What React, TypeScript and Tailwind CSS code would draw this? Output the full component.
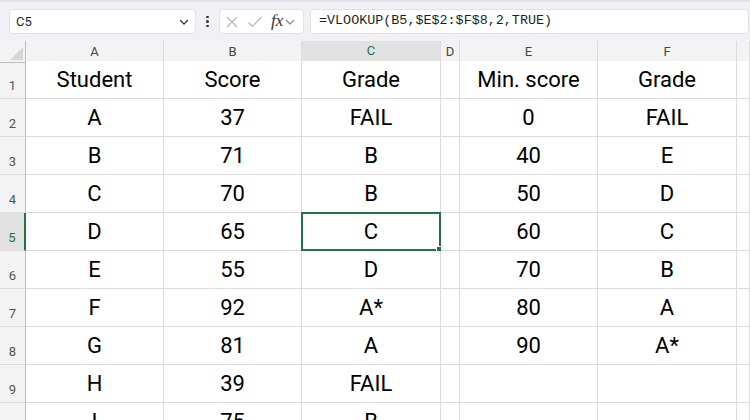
import React from "react";

const rows: string[][] = [
  ["Student", "Score", "Grade", "", "Min. score", "Grade"],
  ["A", "37", "FAIL", "", "0", "FAIL"],
  ["B", "71", "B", "", "40", "E"],
  ["C", "70", "B", "", "50", "D"],
  ["D", "65", "C", "", "60", "C"],
  ["E", "55", "D", "", "70", "B"],
  ["F", "92", "A*", "", "80", "A"],
  ["G", "81", "A", "", "90", "A*"],
  ["H", "39", "FAIL", "", "", ""],
  ["I", "75", "B", "", "", ""],
];

const cols = ["A", "B", "C", "D", "E", "F", ""];
const gridCols = "grid grid-cols-[26px_138px_138px_139px_19px_138px_139px_1fr]";

function Chevron({ className }: { className: string }) {
  return (
    <svg width="12" height="12" viewBox="0 0 12 12" className={className}>
      <path d="M2.5 4.5 L6 8 L9.5 4.5" fill="none" stroke="currentColor" strokeWidth="1.2" strokeLinecap="round" strokeLinejoin="round" />
    </svg>
  );
}

function Toolbar() {
  return (
    <div className="bg-[#f1f0f5]">
      <div className="h-[2px] bg-[#e4e3e8]" />
      <div className="h-[39px] flex items-start pt-[7px] pl-[9px] gap-0">
        <div className="w-[187px] h-[25px] bg-white rounded-[4px] border border-[#e2e1e6] flex items-center pl-[6px] pr-[5px]">
          <span className="flex-1 text-[13px] text-[#1f1f1f]">C5</span>
          <Chevron className="text-[#333]" />
        </div>
        <div className="w-[23px] h-[25px] flex flex-col items-center justify-center gap-[2px]">
          <div className="w-[2.5px] h-[2.5px] bg-[#333] rounded-full" />
          <div className="w-[2.5px] h-[2.5px] bg-[#333] rounded-full" />
          <div className="w-[2.5px] h-[2.5px] bg-[#333] rounded-full" />
        </div>
        <div className="w-[85px] h-[25px] bg-white rounded-[4px] border border-[#e2e1e6] flex items-center pl-[5px]">
          <svg width="14" height="14" viewBox="0 0 14 14" className="text-[#b4b4b4]">
            <path d="M2 2 L12 12 M12 2 L2 12" stroke="currentColor" strokeWidth="1.1" />
          </svg>
          <svg width="16" height="14" viewBox="0 0 16 14" className="text-[#b4b4b4] ml-[8px]">
            <path d="M1.5 7.5 L5.5 11.5 L14.5 2" fill="none" stroke="currentColor" strokeWidth="1.1" />
          </svg>
          <span className="ml-[8px] text-[17px] italic text-[#333] leading-none pb-[2px]" style={{ fontFamily: "'Liberation Serif', serif" }}>
            fx
          </span>
          <Chevron className="text-[#888] ml-[1px]" />
        </div>
        <div className="ml-[6px] w-[439px] h-[25px] bg-white rounded-[4px] border border-[#e2e1e6] flex items-center pl-[8px]">
          <span className="text-[13.4px] text-[#1f1f1f]" style={{ fontFamily: "'Liberation Mono', monospace" }}>
            =VLOOKUP(B5,$E$2:$F$8,2,TRUE)
          </span>
        </div>
      </div>
    </div>
  );
}

function HeaderRow() {
  return (
    <div className={`${gridCols} h-[20px]`}>
      <div className="bg-[#f3f3f3] border-r border-b border-[#bdbdbd] relative">
        <div className="absolute right-[2px] bottom-[2px] w-0 h-0 border-l-[13px] border-l-transparent border-b-[13px] border-b-[#d6d6d6]" />
      </div>
      {cols.map((c, i) =>
        c === "C" ? (
          <div key={i} className="bg-[#e1e1e1] border-r border-[#dcdcdc] border-b-2 border-b-[#217346] flex items-center justify-center text-[13px] text-[#217346]">
            {c}
          </div>
        ) : (
          <div key={i} className="bg-[#f3f3f3] border-r border-r-[#dcdcdc] border-b border-b-[#bdbdbd] flex items-center justify-center text-[13px] text-[#444]">
            {c}
          </div>
        )
      )}
    </div>
  );
}

function DataRow({ n, cells }: { n: number; cells: string[] }) {
  const selectedRow = n === 5;
  return (
    <div className={`${gridCols} h-[38px]`}>
      <div
        className={
          selectedRow
            ? "bg-[#e1e1e1] border-r-2 border-r-[#217346] border-b border-b-[#dcdcdc] flex items-end justify-center pb-[3px] text-[13px] text-[#217346]"
            : "bg-[#f3f3f3] border-r border-r-[#bdbdbd] border-b border-b-[#dcdcdc] flex items-end justify-center pb-[3px] text-[13px] text-[#555]"
        }
      >
        {n}
      </div>
      {[...cells, ""].map((v, i) => (
        <div
          key={i}
          className="relative bg-white border-r border-b border-[#dcdcdc] flex items-end justify-center pb-[5px] text-[22px] leading-[26px] text-black"
        >
          {v}
          {selectedRow && i === 2 && (
            <div className="absolute left-[-1px] top-[-1px] right-[-1px] bottom-[-1px] border-2 border-[#217346]">
              <div className="absolute right-[-4px] bottom-[-4px] w-[6px] h-[6px] bg-[#217346] ring-1 ring-white" />
            </div>
          )}
        </div>
      ))}
    </div>
  );
}

export default function App() {
  return (
    <div className="w-[750px] h-[420px] overflow-hidden bg-white" style={{ fontFamily: "Roboto, 'Noto Sans', sans-serif" }}>
      <Toolbar />
      <HeaderRow />
      {rows.map((r, i) => (
        <DataRow key={i} n={i + 1} cells={r} />
      ))}
    </div>
  );
}
